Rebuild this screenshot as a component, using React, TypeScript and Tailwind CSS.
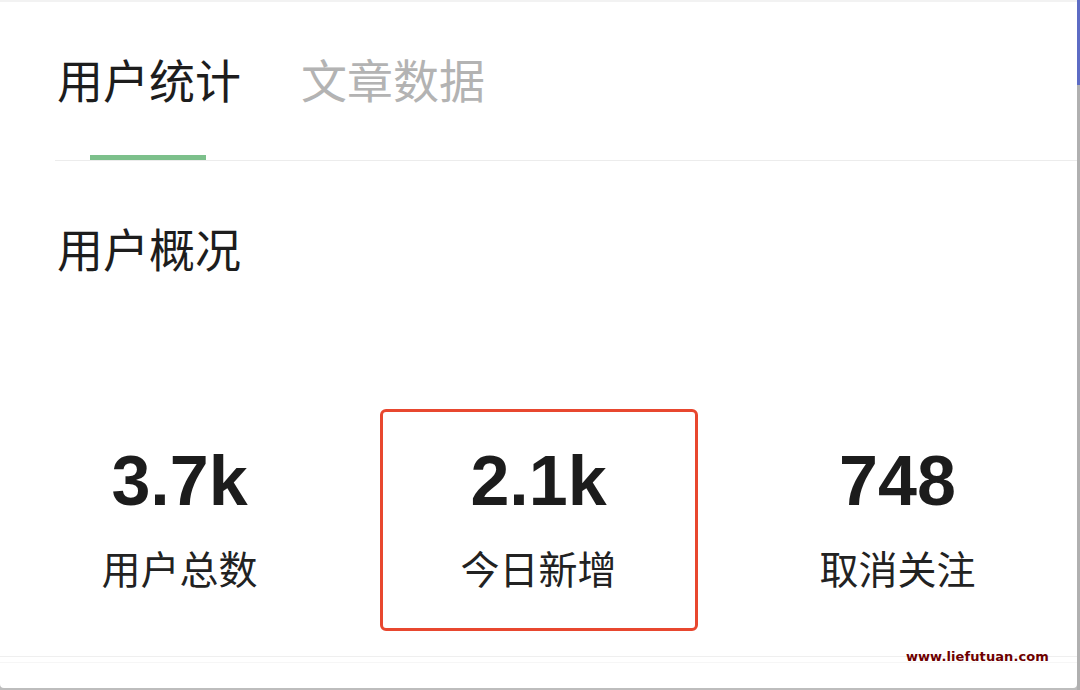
import React from "react";

const cjk = { fontFamily: '"Noto Sans CJK SC", "Noto Sans", sans-serif' };
const num = { fontFamily: '"Liberation Sans", Arial, sans-serif' };

function Stat({ value, label, boxed }: { value: string; label: string; boxed?: boolean }) {
  return (
    <div className="flex justify-center">
      <div
        className={
          "flex h-[222px] w-[318px] flex-col items-center " +
          (boxed ? "rounded-[6px] border-[3px] border-[#e8472f]" : "border-[3px] border-transparent")
        }
      >
        <div style={num} className="mt-[29px] text-[70px] font-bold leading-[80px] text-[#1c1c1c]">
          {value}
        </div>
        <div style={cjk} className="mt-[22px] text-[39px] leading-[48px] text-[#222]">
          {label}
        </div>
      </div>
    </div>
  );
}

export default function App() {
  return (
    <div className="flex h-[690px] w-[1080px] overflow-hidden bg-[#bdbdbd]">
      <div className="relative flex h-[688px] w-[1077px] flex-col rounded-b-[4px] border-t-2 border-[#f2f2f2] bg-white">
        {/* Tabs */}
        <div className="ml-[55px] flex h-[159px] flex-col border-b border-[#ececec]">
          <div className="flex flex-1 items-start gap-[60px] pl-[2px] pt-[47px]" style={cjk}>
            <span className="text-[46px] leading-[58px] text-[#1d1d1d]">用户统计</span>
            <span className="text-[46px] leading-[58px] text-[#b3b3b3]">文章数据</span>
          </div>
          <div className="ml-[35px] h-[5px] w-[116px] bg-[#7cc08b]" />
        </div>

        {/* Section title */}
        <div style={cjk} className="ml-[57px] mt-[57px] text-[46px] leading-[58px] text-[#1d1d1d]">
          用户概况
        </div>

        {/* Stats */}
        <div className="mt-[133px] grid grid-cols-3">
          <Stat value="3.7k" label="用户总数" />
          <Stat value="2.1k" label="今日新增" boxed />
          <Stat value="748" label="取消关注" />
        </div>

        <div className="mt-[25px] h-[1px] bg-[#efefef]" />
        <div className="mt-[5px] h-[1px] bg-[#f6f6f6]" />

        <div
          className="absolute right-[28px] top-[645px] text-[13px] font-bold leading-[20px] tracking-[0.1px] text-[#6e0000]"
          style={{ fontFamily: '"DejaVu Sans", sans-serif' }}
        >
          www.liefutuan.com
        </div>
      </div>
      <div className="flex w-[3px] flex-col">
        <div className="h-[85px] bg-[#5d6cc4]" />
        <div className="flex-1 bg-[#b0b0b0]" />
      </div>
    </div>
  );
}
